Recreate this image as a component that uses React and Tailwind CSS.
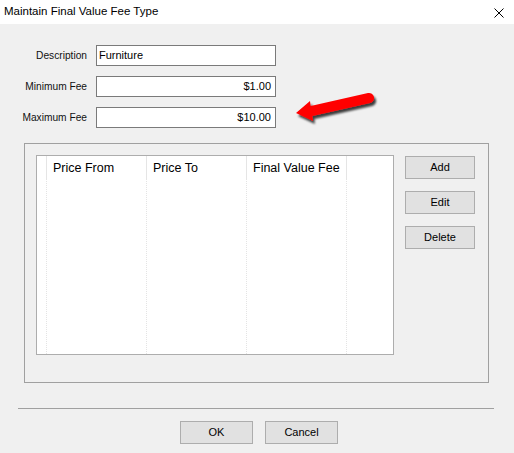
import React from "react";

const font = { fontFamily: '"Liberation Sans", Arial, sans-serif' };

function Field({ label, value, right }) {
  return (
    <div className="flex items-center">
      <label className="w-[88px] pr-[1px] text-right text-[10.2px] text-[#111]">{label}</label>
      <div
        className={`ml-[8px] h-[21px] w-[180px] border border-[#7a7a7a] bg-white flex items-center text-[11px] text-black ${
          right ? "justify-end pr-[4px]" : "pl-[2px]"
        }`}
      >
        {value}
      </div>
    </div>
  );
}

function Btn({ children, w = "w-[70px]" }) {
  return (
    <button
      className={`${w} h-[23px] border border-[#adadad] bg-[#e1e1e1] text-[11px] text-black flex items-center justify-center`}
    >
      {children}
    </button>
  );
}

export default function App() {
  const cols = ["Price From", "Price To", "Final Value Fee"];

  return (
    <div className="relative w-[514px] h-[453px] bg-[#f0f0f0] flex flex-col" style={font}>
      {/* Title bar */}
      <div className="h-[24px] bg-white flex items-center justify-between pl-[4px] pr-[10px]">
        <span className="text-[11.5px] text-black">Maintain Final Value Fee Type</span>
        <svg width="10" height="10" viewBox="0 0 10 10" className="mt-[1px]">
          <path d="M0.5 0.5L9.5 9.5M9.5 0.5L0.5 9.5" stroke="#000" strokeWidth="1" />
        </svg>
      </div>

      {/* Fields */}
      <div className="mt-[21px] flex flex-col gap-[10px]">
        <Field label="Description" value="Furniture" />
        <Field label="Minimum Fee" value="$1.00" right />
        <Field label="Maximum Fee" value="$10.00" right />
      </div>

      {/* Group box with fee grid */}
      <div className="mt-[15px] ml-[24px] w-[465px] h-[240px] border border-[#a0a0a0] flex pl-[11px] pt-[11px]">
        <div className="w-[358px] h-[200px] border border-[#adadad] bg-white flex">
          <div className="w-[10px] border-r border-dotted border-[#e4e4e4] flex flex-col">
            <div className="h-[22px] mt-[1px] border-r border-[#e5e5e5] -mr-[1px]" />
          </div>
          {cols.map((c) => (
            <div key={c} className="w-[100px] border-r border-dotted border-[#e4e4e4] flex flex-col">
              <div className="h-[22px] mt-[1px] -mr-[1px] border-r border-[#e5e5e5] flex items-center pl-[6px] text-[12.5px] text-black">
                {c}
              </div>
            </div>
          ))}
        </div>
        <div className="ml-[11px] mt-[1px] flex flex-col gap-[12px]">
          <Btn>Add</Btn>
          <Btn>Edit</Btn>
          <Btn>Delete</Btn>
        </div>
      </div>

      {/* Bottom separator */}
      <div className="mt-[25px] ml-[18px] w-[476px] h-[1px] bg-[#a0a0a0]" />

      <div className="mt-[12px] ml-[180px] flex gap-[12px]">
        <Btn w="w-[73px]">OK</Btn>
        <Btn w="w-[73px]">Cancel</Btn>
      </div>

      {/* Red annotation arrow */}
      <svg className="absolute left-0 top-0 pointer-events-none" width="514" height="453">
        <defs>
          <filter id="arrowShadow" x="-20%" y="-50%" width="140%" height="200%">
            <feDropShadow dx="2" dy="3" stdDeviation="1.3" floodColor="#000" floodOpacity="0.75" />
          </filter>
        </defs>
        <path
          d="M296 113 L310 101 L310.7 106 L368 93 A5 5 0 0 1 370 103 L312.3 116 L313 121 Z"
          fill="#ff0000"
          filter="url(#arrowShadow)"
        />
      </svg>
    </div>
  );
}
